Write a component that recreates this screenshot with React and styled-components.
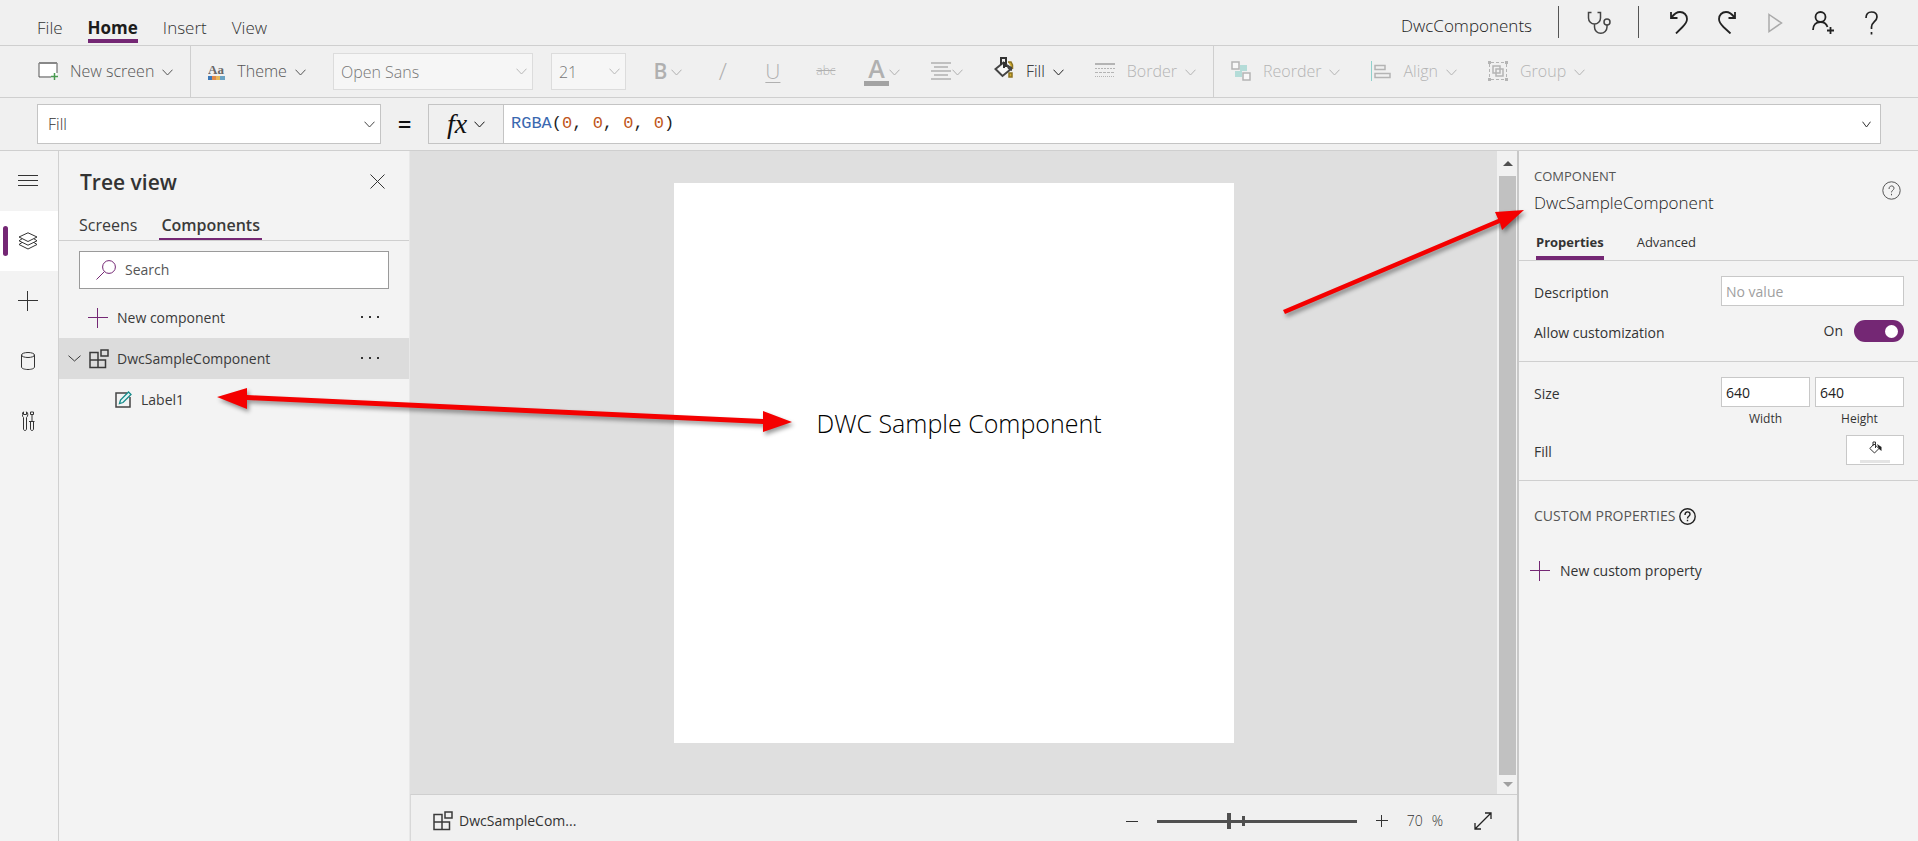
import React, { useState } from 'react';
import styled, { createGlobalStyle, css } from 'styled-components';

const purple = '#742774';
const ui = '"Open Sans", "Noto Sans", sans-serif';

const GlobalStyle = createGlobalStyle`
  *, *::before, *::after { box-sizing: border-box; }
  body { margin: 0; background: #f3f3f3; color: #333; font: 400 14px/20px ${ui}; }
  button, input, select { font: inherit; color: inherit; margin: 0; }
  button { padding: 0; border: 0; background: none; cursor: pointer; }
  svg { display: block; flex: none; }
  h1, h2, h3, p { margin: 0; }
`;

/* ---------- icons ---------- */

const Icon = ({ w = 20, h = w, children, color = 'currentColor', sw = 1 }) => (
  <svg width={w} height={h} viewBox={`0 0 ${w} ${h}`} fill="none" stroke={color} strokeWidth={sw} aria-hidden="true">
    {children}
  </svg>
);

const Chevron = ({ w = 11 }) => (
  <Icon w={w} h={7}><path d={`M.5 .7 L${w / 2} 6 L${w - 0.5} .7`} /></Icon>
);
const Plus = ({ size = 20, color }) => (
  <Icon w={size} color={color}><path d={`M0 ${size / 2 - 0.5}H${size}M${size / 2 - 0.5} 0V${size}`} /></Icon>
);
const NewScreenIcon = () => (
  <Icon w={20} h={18}>
    <path d="M1 1H19V14H1Z" fill="#fff" stroke="none" />
    <path d="M19 11V1H1V15H13" stroke="#555" />
    <path d="M1 1H19" stroke="#888" strokeWidth="2" />
    <path d="M16.500 11V18M13 14.500H20" stroke="#4a9a50" strokeWidth="1.500" />
  </Icon>
);
const ThemeIcon = () => (
  <Icon w={17} h={18}>
    <text x="0" y="12" fontFamily="Liberation Serif, serif" fontSize="13" fontWeight="700" fill="#666" stroke="none">Aa</text>
    <g stroke="none">
      <path d="M0 14H4V18H0Z" fill="#3b78b8" /><path d="M4 14H8V18H4Z" fill="#e08a4a" />
      <path d="M8 14H12V18H8Z" fill="#e8b95a" /><path d="M12 14H17V18H12Z" fill="#6aa3c4" />
    </g>
  </Icon>
);
const AlignTextIcon = () => (
  <Icon w={20} h={18} sw={1.5}><path d="M0 1H20M3 5H17M0 9H20M3 13H17M0 17H20" /></Icon>
);
const BucketIcon = () => (
  <Icon w={20} h={27}>
    <path d="M14 5H17L18.500 8V12M15 16H18V20H15Z" stroke="#8c7320" strokeWidth="1.500" fill="#d1ad32" />
    <path d="M9.500 5.500L17 12L8.500 19L1.500 12Z" fill="#f8f8f8" stroke="#444" strokeWidth="2" />
    <path d="M7 8V1H12V10M10 5V11" stroke="#333" strokeWidth="2" />
    <path d="M12 7L18 10V14L14 12Z" fill="#444" stroke="none" />
  </Icon>
);
const BorderIcon = () => (
  <Icon w={20} h={15}>
    <path d="M0 1H20" strokeWidth="2" /><path d="M0 5.500H20" strokeDasharray="2 1" />
    <path d="M0 9.500H20" strokeDasharray="3 1" /><path d="M0 13.500H20" strokeDasharray="1 1" />
  </Icon>
);
const ReorderIcon = () => (
  <Icon w={20}>
    <path d="M9 4H16V10H9ZM4 10H11V16H4Z" fill="#b4dcd8" stroke="none" />
    <path d="M1 1H8V8H1ZM12 12H19V19H12Z" fill="#f8f8f8" strokeWidth="1.500" />
  </Icon>
);
const AlignIcon = () => (
  <Icon w={20}><path d="M.5 0V20" stroke="#8fd0cc" /><path d="M4 4.500H14V8.500H4ZM4 12.500H19V16.500H4Z" strokeWidth="1.500" /></Icon>
);
const GroupIcon = () => (
  <Icon w={20}>
    <path d="M3 1.500H17M3 18.500H17M1.500 3V17M18.500 3V17" strokeDasharray="3 2" />
    <path d="M5 5H12V12H5ZM8 8H15V15H8Z" strokeWidth="1.500" />
    <path d="M0 0H3V3H0ZM17 0H20V3H17ZM0 17H3V20H0ZM17 17H20V20H17Z" fill="currentColor" stroke="none" />
  </Icon>
);
const StethoscopeIcon = () => (
  <Icon w={24} sw={1.500} color="#444">
    <path d="M4.500 1.500H1.500V7A6 6 0 0 0 13.500 7V1.500H10.500M7.500 13V16A6.200 6.200 0 0 0 20 16V14" />
    <circle cx="20" cy="11" r="3" />
  </Icon>
);
const UndoIcon = () => (
  <Icon w={18} h={23} sw={1.8} color="#222"><path d="M1 1V7H7.500M1.500 6.500C4 3 6.500 1 10 1C14 1 17 4 17 8C17 11 15 13.500 12.500 16L6 22.500" /></Icon>
);
const RedoIcon = () => (
  <Icon w={18} h={23} sw={1.8} color="#222"><path d="M17 1V7H10.500M16.500 6.500C14 3 11.500 1 8 1C4 1 1 4 1 8C1 11 3 13.500 5.500 16L12.500 22.500" /></Icon>
);
const PlayIcon = () => (
  <Icon w={15} h={20} sw={1.500} color="#aaa"><path d="M1 1.500L13.500 10L1 18.500Z" /></Icon>
);
const PersonIcon = () => (
  <Icon w={22} h={23} sw={1.800} color="#222">
    <circle cx="8.500" cy="6" r="5" /><path d="M1 19C1 14 4 11 8.500 11C12 11 14.500 13 15.500 16M18.500 16V23M15 19.500H22" />
  </Icon>
);
const QuestionIcon = () => (
  <Icon w={13} h={24} sw={1.700} color="#222">
    <path d="M1 7C1 3 3 1 6.500 1C10 1 12 3 12 6C12 10.500 6.500 11 6.500 16V18" /><path d="M6.500 21V23.500" />
  </Icon>
);
const HamburgerIcon = () => (
  <Icon w={20} h={12}><path d="M0 .5H20M0 5.500H20M0 10.500H20" /></Icon>
);
const LayersIcon = () => (
  <Icon w={20} h={18}>
    <path d="M10 .8L19 5L10 9.500L1 5ZM4 6.800L1 8.800L10 13.200L19 8.800L16 6.800M4 10.500L1 12.500L10 17L19 12.500L16 10.500" />
  </Icon>
);
const DataIcon = () => (
  <Icon w={14} h={18}>
    <ellipse cx="7" cy="3" rx="6.500" ry="2.500" /><path d="M.5 3V15C.5 16.500 3.500 17.500 7 17.500S13.500 16.500 13.500 15V3" />
  </Icon>
);
const ToolsIcon = () => (
  <Icon w={13} h={20}>
    <path d="M1.500 6.500V18C1.500 20 4.500 20 4.500 18V6.500C6 5.500 6.500 2 4.500 .8V3.500H1.500V.8C-.3 2 0 5.500 1.500 6.500Z" />
    <path d="M8.500 1H11.500V3.500H8.500ZM10 3.500V10M7 10.500H12.500M8.500 10.500V18C8.500 20 11.500 20 11.500 18V10.500" />
  </Icon>
);
const CloseIcon = () => (
  <Icon w={15}><path d="M.5 .5L14.500 14.500M14.500 .5L.5 14.500" /></Icon>
);
const SearchIcon = () => (
  <Icon w={20} color={purple}><circle cx="13" cy="7" r="6.400" /><path d="M8.500 11.500L.5 19.500" /></Icon>
);
const ComponentIcon = () => (
  <Icon w={20} sw={1.500} color="#3a3a3a"><path d="M1 3.500H9V18.500H1ZM1 11H16.500V18.500H9M12 1H19V7H12Z" /></Icon>
);
const LabelIcon = () => (
  <Icon w={17}>
    <path d="M12 2H1V16H15V6" stroke="#444" strokeWidth="1.500" />
    <path d="M4.500 12.500L5.500 9L13.500 1L16 3.500L8 11.500Z" fill="#e4f5f4" stroke="#148a8a" strokeWidth="1.300" />
  </Icon>
);
const HelpIcon = ({ size, color }) => (
  <Icon w={size} color={color} sw={size > 18 ? 1 : 1.400}>
    <circle cx={size / 2} cy={size / 2} r={size / 2 - 0.8} />
    <path d={`M${size / 2 - 2.5} ${size / 2 - 1.5}c0-4 5-4 5-.8c0 2-2.500 2-2.500 4.200M${size / 2} ${size / 2 + 3.3}v1.500`} />
  </Icon>
);
const SmallBucketIcon = () => (
  <Icon w={13} color="#333"><path d="M5 3L10 7.500L5.500 12L.8 7.500ZM4 5V1H6.500V7" /><path d="M8 3L12.500 6V10L10 8Z" fill="#222" stroke="none" /></Icon>
);
const ExpandIcon = () => (
  <Icon w={18} color="#222" sw={1.300}><path d="M1 17L17 1M11 1H17V7M1 11V17H7" /></Icon>
);

/* ---------- shell ---------- */

const Shell = styled.div`
  position: relative;
  min-height: 100vh;
  display: flex;
  flex-direction: column;
`;
const Header = styled.header`
  display: flex;
  justify-content: space-between;
  height: 46px;
  padding: 0 23px 0 37px;
  background: #f0f0f0;
  border-bottom: 1px solid #cfcfcf;
`;
const MenuTabs = styled.nav`
  display: flex;
  align-items: flex-end;
  gap: 25px;
  padding-bottom: 2px;
`;
const MenuTab = styled.button`
  font-size: 17px;
  line-height: 22px;
  font-weight: ${p => (p.$active ? 700 : 300)};
  color: ${p => (p.$active ? '#1c1c1c' : '#333')};
  border-bottom: 4px solid ${p => (p.$active ? purple : 'transparent')};
`;
const HeaderTools = styled.div`
  display: flex;
  align-items: flex-start;
`;
const AppName = styled.span`
  padding: 15px 11px 0 0;
  font-size: 17px;
  line-height: 22px;
  font-weight: 300;
  color: #222;
`;
const HeaderRule = styled.span`
  width: 1px;
  height: 32px;
  margin: 6px 16px 0 15px;
  background: #555;
`;
const HeaderButton = styled.button`
  display: grid;
  place-items: center;
  width: 48px;
  height: 45px;
`;

const Ribbon = styled.div`
  display: flex;
  align-items: center;
  height: 52px;
  padding-left: 38px;
  background: #f0f0f0;
  border-bottom: 1px solid #cfcfcf;
`;
const RibbonRule = styled.span`
  width: 1px;
  height: 100%;
  margin: 0 17px;
  background: #cfcfcf;
`;
const RibbonGroup = styled.div`
  display: flex;
  align-items: center;
  gap: ${p => p.$gap}px;
  margin-left: ${p => p.$start || 0}px;
`;
const ToolButton = styled.button`
  display: flex;
  align-items: center;
  gap: 8px;
  height: 36px;
  padding-bottom: 2px;
  font-size: 16px;
  line-height: 22px;
  font-weight: 300;
  white-space: nowrap;
  color: ${p => (p.$tone === 'dark' ? '#222' : p.$tone === 'mid' ? '#555' : '#b4b4b4')};
  > svg:first-child { margin-right: 4px; }
  > svg:last-child { margin-top: 3px; }
`;
const FormatButton = styled.button`
  display: flex;
  align-items: center;
  justify-content: center;
  gap: ${p => p.$gap || 0}px;
  width: ${p => p.$width}px;
  height: 36px;
  padding-bottom: 2px;
  color: #b0b0b0;
  > svg:last-child:not(:first-child) { margin-top: 3px; }
`;
const Glyph = styled.span`
  font-size: ${p => p.$size}px;
  line-height: 24px;
  font-weight: ${p => p.$weight || 300};
  text-decoration: ${p => p.$line || 'none'};
  text-underline-offset: 3px;
  text-decoration-thickness: 1px;
`;
const FontColour = styled.span`
  width: 28px;
  border-bottom: 5px solid #a3a3a3;
  font-size: 25px;
  line-height: 26px;
  font-weight: 600;
  text-align: center;
`;

const SelectFrame = styled.label`
  display: grid;
  flex: none;
  align-items: center;
  width: ${p => p.$width}px;
  height: ${p => p.$height}px;
  background: ${p => (p.$muted ? '#f6f6f6' : '#fff')};
  border: 1px solid ${p => (p.$muted ? '#dcdcdc' : '#c4c4c4')};
  color: ${p => (p.$muted ? '#b8b8b8' : '#444')};
  > * { grid-area: 1 / 1; }
  > svg { justify-self: end; margin-right: 5px; pointer-events: none; }
`;
const Select = styled.select`
  appearance: none;
  width: 100%;
  height: 100%;
  padding: 0 20px 0 ${p => p.$inset}px;
  border: 0;
  background: none;
  font-size: 16px;
  font-weight: 300;
  color: ${p => (p.$muted ? '#777' : '#333')};
  opacity: 1;
`;

const FormulaBar = styled.div`
  display: flex;
  align-items: center;
  height: 53px;
  padding: 0 37px;
  background: #f0f0f0;
  border-bottom: 1px solid #cfcfcf;
`;
const EqualsSign = styled.span`
  width: 47px;
  text-align: center;
  font-size: 24px;
  line-height: 30px;
  font-weight: 600;
  color: #111;
`;
const FxButton = styled.button`
  display: flex;
  align-items: center;
  justify-content: center;
  gap: 7px;
  width: 76px;
  height: 40px;
  border: 1px solid #c4c4c4;
  font: italic 400 28px/30px "Liberation Serif", serif;
  color: #111;
`;
const FormulaField = styled.div`
  flex: 1;
  display: grid;
  align-items: center;
  height: 40px;
  background: #fff;
  border: 1px solid #c4c4c4;
  border-left: 0;
  > * { grid-area: 1 / 1; }
  > svg { justify-self: end; margin-right: 9px; }
`;
const formulaText = css`
  padding: 0 30px 0 7px;
  font: 400 17px/22px "Liberation Mono", monospace;
`;
const FormulaCode = styled.code`
  ${formulaText}
  color: #222;
  white-space: pre;
`;
const FormulaInput = styled.input`
  ${formulaText}
  width: 100%;
  height: 100%;
  border: 0;
  background: none;
  color: transparent;
  caret-color: #222;
`;
const FnToken = styled.span`color: #3a68b0;`;
const NumToken = styled.span`color: #c0561a;`;

const Workspace = styled.div`
  flex: 1;
  display: flex;
`;

/* ---------- left rail ---------- */

const Rail = styled.nav`
  flex: none;
  width: 59px;
  background: #f3f3f3;
  border-right: 1px solid #d0d0d0;
`;
const RailButton = styled.button`
  display: grid;
  grid-template-columns: 8px 1fr 8px;
  place-items: center;
  width: 100%;
  height: 60px;
  padding-right: 2px;
  color: #333;
  background: ${p => (p.$active ? '#fff' : 'none')};
  &::before {
    content: '';
    justify-self: end;
    width: 5px;
    height: 30px;
    border-radius: 3px;
    background: ${p => (p.$active ? purple : 'transparent')};
  }
`;

/* ---------- tree panel ---------- */

const TreePanel = styled.aside`
  flex: none;
  width: 351px;
  background: #f3f3f3;
  border-right: 1px solid #e8e8e8;
`;
const TreeHead = styled.div`
  display: flex;
  align-items: center;
  justify-content: space-between;
  height: 63px;
  padding: 0 24px 2px 21px;
`;
const TreeTitle = styled.h2`
  font-size: 21px;
  line-height: 28px;
  font-weight: 600;
`;
const TreeTabs = styled.div`
  display: flex;
  gap: 20px;
  padding-left: 18px;
  border-bottom: 1px solid #cfcfcf;
`;
const TreeTab = styled.button`
  padding: 0 2px 2px;
  font-size: 16px;
  line-height: 22px;
  font-weight: ${p => (p.$active ? 600 : 400)};
  color: #3a3a3a;
  border-bottom: 2px solid ${p => (p.$active ? purple : 'transparent')};
`;
const SearchBox = styled.label`
  display: flex;
  align-items: center;
  gap: 9px;
  height: 38px;
  margin: 10px 20px 8px;
  padding: 0 16px;
  background: #fff;
  border: 1px solid #9a9a9a;
`;
const SearchInput = styled.input`
  flex: 1;
  min-width: 0;
  padding: 0;
  border: 0;
  background: none;
  font-size: 14px;
  &::placeholder { color: #555; opacity: 1; }
`;
const TreeRow = styled.div`
  display: flex;
  align-items: center;
  justify-content: space-between;
  height: 41px;
  padding: 0 30px 0 ${p => p.$indent}px;
  background: ${p => (p.$selected ? '#dcdcdc' : 'none')};
`;
const TreeItem = styled.button`
  display: flex;
  align-items: center;
  gap: ${p => p.$gap || 9}px;
  font-size: 14px;
  color: #3a3a3a;
`;
const MoreButton = styled.button`
  display: flex;
  gap: 6px;
  padding: 8px 0 10px;
  &::before, &::after, > span { content: ''; width: 2px; height: 2px; background: #333; }
`;

/* ---------- canvas ---------- */

const Centre = styled.main`
  flex: 1;
  min-width: 0;
  display: flex;
  flex-direction: column;
`;
const CanvasArea = styled.div`
  flex: 1;
  display: flex;
  background: #dfdfdf;
`;
const Stage = styled.div`
  flex: 1;
  display: flex;
  justify-content: center;
  align-items: flex-start;
  padding: 32px 0;
`;
const Artboard = styled.div`
  width: 560px;
  height: 560px;
  padding: 223px 0 0 143px;
  background: #fff;
`;
const CanvasLabel = styled.p`
  font-size: 25px;
  line-height: 34px;
  font-weight: 300;
  color: #000;
  white-space: nowrap;
`;
const ScrollTrack = styled.div`
  display: flex;
  flex-direction: column;
  align-items: center;
  width: 20px;
  padding-left: 1px;
  background: #f1f1f1;
`;
const ScrollThumb = styled.div`
  flex: 1;
  width: 17px;
  background: #c1c1c1;
`;
const ScrollArrow = styled.span`
  display: grid;
  place-items: center;
  height: ${p => p.$height}px;
  &::before {
    content: '';
    border: 5px solid transparent;
    ${p => (p.$up ? 'border-top: 0; border-bottom-color: #505050;' : 'border-bottom: 0; border-top-color: #a0a0a0;')}
  }
`;
const Footer = styled.footer`
  display: flex;
  align-items: center;
  justify-content: space-between;
  height: 47px;
  padding: 6px 25px 0 22px;
  background: #f0f0f0;
  border-top: 1px solid #cfcfcf;
  border-left: 1px solid #d8d8d8;
`;
const Crumb = styled.button`
  display: flex;
  align-items: center;
  gap: 6px;
`;
const ZoomTools = styled.div`
  display: flex;
  align-items: center;
  gap: 19px;
  color: #333;
`;
const ZoomRange = styled.input`
  appearance: none;
  width: 200px;
  height: 16px;
  background:
    linear-gradient(#505050, #505050) 85px 50% / 3px 10px no-repeat,
    linear-gradient(#505050, #505050) 0 50% / 100% 3px no-repeat;
  &::-webkit-slider-thumb {
    appearance: none;
    width: 4px;
    height: 16px;
    background: #505050;
  }
`;
const ZoomValue = styled.output`
  display: flex;
  gap: 9px;
  padding-right: 12px;
  font-weight: 300;
`;

/* ---------- properties panel ---------- */

const Properties = styled.aside`
  flex: none;
  width: 401px;
  background: #f3f3f3;
  border-left: 2px solid #c8c8c8;
`;
const PropHead = styled.div`
  display: flex;
  align-items: center;
  justify-content: space-between;
  padding: 15px 17px 0 15px;
`;
const PropKind = styled.p`
  font-size: 13px;
  line-height: 20px;
  color: #555;
`;
const PropName = styled.h2`
  padding-top: 5px;
  font-size: 17px;
  line-height: 24px;
  font-weight: 300;
  color: #222;
`;
const PropTabs = styled.div`
  display: flex;
  gap: 33px;
  padding: 17px 0 0 17px;
  border-bottom: 1px solid #cfcfcf;
`;
const PropTab = styled.button`
  padding-bottom: 4px;
  font-size: 13px;
  line-height: 20px;
  font-weight: ${p => (p.$active ? 700 : 400)};
  border-bottom: 4px solid ${p => (p.$active ? purple : 'transparent')};
`;
const PropSection = styled.section`
  padding: 15px 14px ${p => p.$bottom}px 15px;
  border-bottom: 1px solid #cfcfcf;
`;
const PropRow = styled.div`
  display: flex;
  align-items: center;
  justify-content: space-between;
  height: ${p => p.$height || 30}px;
  margin-top: ${p => p.$top || 0}px;
`;
const PropLabel = styled.label`
  padding-top: 3px;
`;
const TextField = styled.input`
  width: ${p => p.$width}px;
  height: 30px;
  padding: 0 4px;
  border: 1px solid #c8c8c8;
  background: #fff;
  color: #222;
  &::placeholder { color: #a0a0a0; opacity: 1; }
`;
const FieldPair = styled.div`
  display: flex;
  justify-content: flex-end;
  gap: 5px;
`;
const FieldCaption = styled.label`
  width: 89px;
  font-size: 12px;
  line-height: 24px;
  text-align: center;
`;
const ToggleLabel = styled.label`
  display: flex;
  align-items: center;
  gap: 11px;
`;
const Toggle = styled.input`
  appearance: none;
  display: flex;
  align-items: center;
  justify-content: ${p => (p.checked ? 'flex-end' : 'flex-start')};
  width: 50px;
  height: 22px;
  padding: 0 6px;
  border-radius: 11px;
  background: ${p => (p.checked ? purple : '#888')};
  &::before { content: ''; width: 13px; height: 13px; border-radius: 50%; background: #fff; }
`;
const FillButton = styled.button`
  display: flex;
  flex-direction: column;
  align-items: center;
  justify-content: space-between;
  width: 58px;
  height: 30px;
  padding: 5px 0 1px;
  background: #fff;
  border: 1px solid #c8c8c8;
  &::after { content: ''; width: 30px; height: 3px; background: #e4e4e4; }
`;
const CustomHead = styled.div`
  display: flex;
  align-items: center;
  gap: 4px;
  padding: 25px 15px 35px;
  h3 { font-size: 14px; line-height: 20px; font-weight: 400; color: #555; }
`;
const AddProperty = styled.button`
  display: flex;
  align-items: center;
  gap: 10px;
  margin-left: 11px;
`;

const Annotations = styled.svg`
  position: absolute;
  top: 0;
  left: 0;
  overflow: visible;
  pointer-events: none;
  filter: drop-shadow(2px 3px 2px rgba(0, 0, 0, 0.4));
`;

const More = ({ label }) => <MoreButton aria-label={label}><span /></MoreButton>;

const Dropdown = ({ label, value, width, height, muted, inset = 7 }) => (
  <SelectFrame $width={width} $height={height} $muted={muted}>
    <Select aria-label={label} defaultValue={value} disabled={muted} $muted={muted} $inset={inset}>
      <option>{value}</option>
    </Select>
    <Chevron />
  </SelectFrame>
);

const Tool = ({ icon, children, tone }) => (
  <ToolButton $tone={tone} disabled={!tone}>{icon}<span>{children}</span><Chevron /></ToolButton>
);

export default function App() {
  const [formula, setFormula] = useState('RGBA(0, 0, 0, 0)');
  const [zoom, setZoom] = useState(36);
  const [custom, setCustom] = useState(true);

  return (
    <Shell>
      <GlobalStyle />
      <Header>
        <MenuTabs>
          <MenuTab>File</MenuTab>
          <MenuTab $active>Home</MenuTab>
          <MenuTab>Insert</MenuTab>
          <MenuTab>View</MenuTab>
        </MenuTabs>
        <HeaderTools>
          <AppName>DwcComponents</AppName>
          <HeaderRule />
          <HeaderButton aria-label="App checker"><StethoscopeIcon /></HeaderButton>
          <HeaderRule />
          <HeaderButton aria-label="Undo"><UndoIcon /></HeaderButton>
          <HeaderButton aria-label="Redo"><RedoIcon /></HeaderButton>
          <HeaderButton aria-label="Preview"><PlayIcon /></HeaderButton>
          <HeaderButton aria-label="Share"><PersonIcon /></HeaderButton>
          <HeaderButton aria-label="Help"><QuestionIcon /></HeaderButton>
        </HeaderTools>
      </Header>

      <Ribbon>
        <Tool icon={<NewScreenIcon />} tone="mid">New screen</Tool>
        <RibbonRule />
        <Tool icon={<ThemeIcon />} tone="mid">Theme</Tool>
        <RibbonGroup $gap={18} $start={27}>
          <Dropdown label="Font" value="Open Sans" width={200} height={37} muted />
          <Dropdown label="Font size" value="21" width={75} height={37} muted />
        </RibbonGroup>
        <RibbonGroup $gap={34} $start={28}>
          <FormatButton $width={28} $gap={4} aria-label="Bold"><Glyph $size={21} $weight={600}>B</Glyph><Chevron /></FormatButton>
          <FormatButton $width={14} aria-label="Italic"><Glyph $size={24}>/</Glyph></FormatButton>
          <FormatButton $width={18} aria-label="Underline"><Glyph $size={21} $line="underline">U</Glyph></FormatButton>
          <FormatButton $width={20} aria-label="Strikethrough"><Glyph $size={12} $line="line-through">abc</Glyph></FormatButton>
        </RibbonGroup>
        <RibbonGroup $gap={31} $start={28}>
          <FormatButton $width={36} aria-label="Font colour"><FontColour>A</FontColour><Chevron /></FormatButton>
          <FormatButton $width={32} $gap={1} aria-label="Text alignment"><AlignTextIcon /><Chevron /></FormatButton>
          <Tool icon={<BucketIcon />} tone="dark">Fill</Tool>
          <Tool icon={<BorderIcon />}>Border</Tool>
        </RibbonGroup>
        <RibbonRule />
        <RibbonGroup $gap={31}>
          <Tool icon={<ReorderIcon />}>Reorder</Tool>
          <Tool icon={<AlignIcon />}>Align</Tool>
          <Tool icon={<GroupIcon />}>Group</Tool>
        </RibbonGroup>
      </Ribbon>

      <FormulaBar>
        <Dropdown label="Property" value="Fill" width={344} height={40} inset={10} />
        <EqualsSign>=</EqualsSign>
        <FxButton aria-label="Functions">fx<Chevron /></FxButton>
        <FormulaField>
          <FormulaCode aria-hidden="true">
            {formula.split(/(\d+|[A-Za-z]+)/).map((part, i) =>
              /^\d/.test(part) ? <NumToken key={i}>{part}</NumToken>
                : /^[A-Za-z]/.test(part) ? <FnToken key={i}>{part}</FnToken> : part)}
          </FormulaCode>
          <FormulaInput aria-label="Formula" value={formula} onChange={e => setFormula(e.target.value)} />
          <Chevron w={9} />
        </FormulaField>
      </FormulaBar>

      <Workspace>
        <Rail>
          <RailButton aria-label="Menu"><HamburgerIcon /></RailButton>
          <RailButton $active aria-label="Tree view"><LayersIcon /></RailButton>
          <RailButton aria-label="Insert"><Plus /></RailButton>
          <RailButton aria-label="Data"><DataIcon /></RailButton>
          <RailButton aria-label="Advanced tools"><ToolsIcon /></RailButton>
        </Rail>

        <TreePanel>
          <TreeHead>
            <TreeTitle>Tree view</TreeTitle>
            <button aria-label="Close"><CloseIcon /></button>
          </TreeHead>
          <TreeTabs>
            <TreeTab>Screens</TreeTab>
            <TreeTab $active>Components</TreeTab>
          </TreeTabs>
          <SearchBox>
            <SearchIcon />
            <SearchInput placeholder="Search" aria-label="Search" />
          </SearchBox>
          <TreeRow $indent={29}>
            <TreeItem><Plus color={purple} />New component</TreeItem>
            <More label="New component options" />
          </TreeRow>
          <TreeRow $indent={9} $selected>
            <TreeItem $gap={8}><Chevron w={13} /><ComponentIcon />DwcSampleComponent</TreeItem>
            <More label="DwcSampleComponent options" />
          </TreeRow>
          <TreeRow $indent={56}>
            <TreeItem><LabelIcon />Label1</TreeItem>
          </TreeRow>
        </TreePanel>

        <Centre>
          <CanvasArea>
            <Stage>
              <Artboard><CanvasLabel>DWC Sample Component</CanvasLabel></Artboard>
            </Stage>
            <ScrollTrack>
              <ScrollArrow $up $height={25} />
              <ScrollThumb />
              <ScrollArrow $height={19} />
            </ScrollTrack>
          </CanvasArea>
          <Footer>
            <Crumb><ComponentIcon />DwcSampleCom...</Crumb>
            <ZoomTools>
              <button aria-label="Zoom out"><Icon w={12}><path d="M0 6.500H12" /></Icon></button>
              <ZoomRange type="range" aria-label="Zoom" value={zoom} onChange={e => setZoom(+e.target.value)} />
              <button aria-label="Zoom in"><Plus size={12} /></button>
              <ZoomValue><span>70</span><span>%</span></ZoomValue>
              <button aria-label="Fit to window"><ExpandIcon /></button>
            </ZoomTools>
          </Footer>
        </Centre>

        <Properties>
          <PropHead>
            <div>
              <PropKind>COMPONENT</PropKind>
              <PropName>DwcSampleComponent</PropName>
            </div>
            <button aria-label="Help"><HelpIcon size={19} color="#555" /></button>
          </PropHead>
          <PropTabs>
            <PropTab $active>Properties</PropTab>
            <PropTab>Advanced</PropTab>
          </PropTabs>
          <PropSection $bottom={19}>
            <PropRow>
              <PropLabel htmlFor="description">Description</PropLabel>
              <TextField id="description" $width={183} placeholder="No value" />
            </PropRow>
            <PropRow $height={22} $top={14}>
              <PropLabel htmlFor="customize">Allow customization</PropLabel>
              <ToggleLabel>On<Toggle id="customize" type="checkbox" checked={custom} onChange={e => setCustom(e.target.checked)} /></ToggleLabel>
            </PropRow>
          </PropSection>
          <PropSection $bottom={15}>
            <PropRow>
              <PropLabel as="span">Size</PropLabel>
              <FieldPair>
                <TextField id="width" $width={89} defaultValue="640" />
                <TextField id="height" $width={89} defaultValue="640" />
              </FieldPair>
            </PropRow>
            <FieldPair>
              <FieldCaption htmlFor="width">Width</FieldCaption>
              <FieldCaption htmlFor="height">Height</FieldCaption>
            </FieldPair>
            <PropRow $top={4}>
              <PropLabel as="span">Fill</PropLabel>
              <FillButton aria-label="Fill colour"><SmallBucketIcon /></FillButton>
            </PropRow>
          </PropSection>
          <CustomHead>
            <h3>CUSTOM PROPERTIES</h3>
            <HelpIcon size={17} color="#222" />
          </CustomHead>
          <AddProperty><Plus color={purple} />New custom property</AddProperty>
        </Properties>
      </Workspace>

      <Annotations width="1" height="1" aria-hidden="true">
        <g fill="#f40000">
          <path d="M217 397L247 388V395L763 419V411L792 422L763 432V424L247 400V409Z" />
          <path d="M1524 210L1495 212L1498 219L1283 310L1285 314L1500 223L1502 230Z" />
        </g>
      </Annotations>
    </Shell>
  );
}
